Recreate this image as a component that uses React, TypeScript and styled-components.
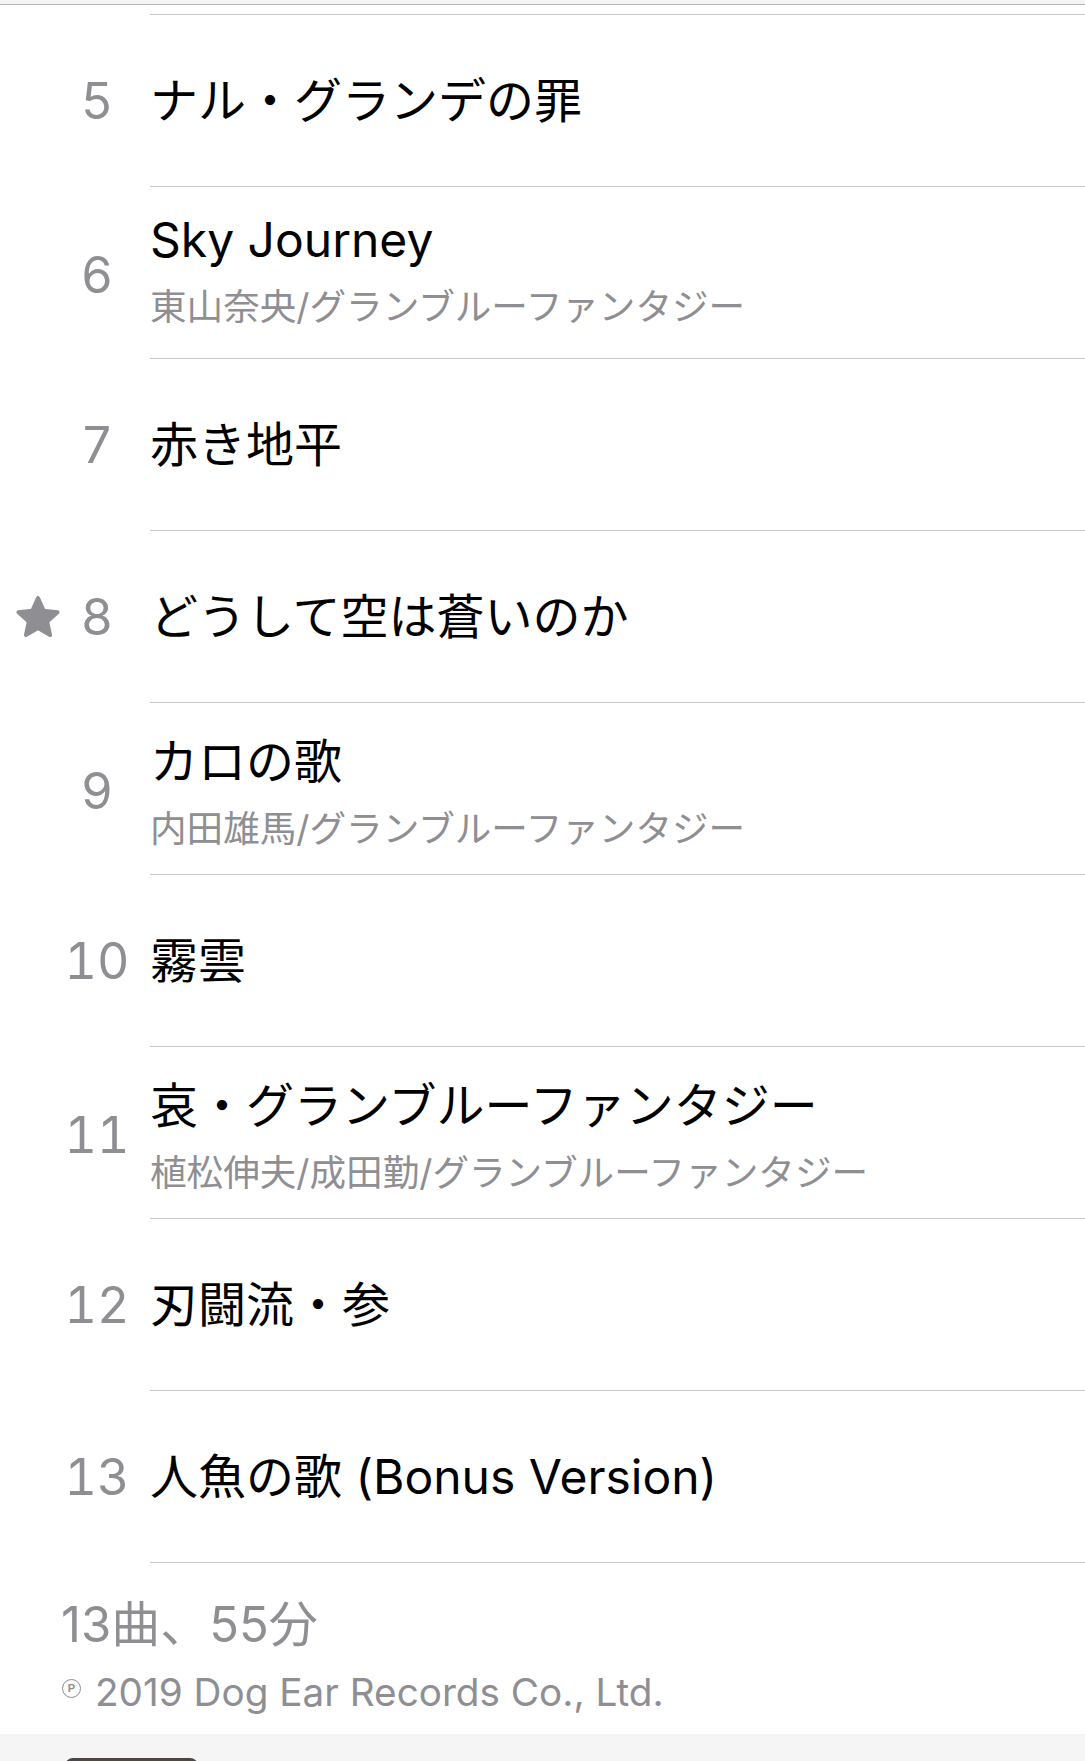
import React from "react";
import styled, { createGlobalStyle } from "styled-components";

const GlobalStyle = createGlobalStyle`
  html, body {
    margin: 0;
    padding: 0;
    background: #ffffff;
  }
  body {
    font-family: "Inter", "Noto Sans CJK JP", sans-serif;
    -webkit-font-smoothing: antialiased;
  }
`;

const Page = styled.div`
  width: 1085px;
  height: 1761px;
  overflow: hidden;
  display: flex;
  flex-direction: column;
  background: #ffffff;
`;

const NavEdge = styled.div`
  height: 4px;
  flex: none;
  background: #f4f4f4;
  border-bottom: 1px solid #b4b4b4;
`;

const List = styled.div`
  display: flex;
  flex-direction: column;
  flex: none;
`;

const Row = styled.div<{ $height: number }>`
  display: grid;
  grid-template-columns: 150px 1fr;
  height: ${(p) => p.$height}px;
`;

const Lead = styled.div<{ $shift?: number }>`
  display: grid;
  grid-template-columns: 67px 60px;
  align-items: center;
  padding-top: ${(p) => p.$shift ?? 0}px;
`;

const StarSlot = styled.div`
  display: flex;
  align-items: center;
  padding-left: 16px;
`;

const NumberSlot = styled.div`
  display: flex;
  justify-content: center;
  font-family: "Inter", sans-serif;
  font-size: 50px;
  font-variant-numeric: tabular-nums;
  line-height: 60px;
  color: #8e8e93;
  white-space: nowrap;
`;

const Body = styled.div<{ $shift?: number }>`
  display: flex;
  flex-direction: column;
  justify-content: center;
  border-bottom: 1px solid #c8c7cc;
  min-width: 0;
  padding-top: ${(p) => Math.max(0, (p.$shift ?? 0) * 2)}px;
  padding-bottom: ${(p) => Math.max(0, -(p.$shift ?? 0) * 2)}px;
`;

const Title = styled.div`
  font-family: "Inter", "Noto Sans CJK JP", sans-serif;
  font-size: 48px;
  line-height: 54px;
  color: #000000;
  white-space: nowrap;
`;

const Artist = styled.div`
  margin-top: 17px;
  font-family: "Inter", "Noto Sans CJK JP", sans-serif;
  font-size: 36.6px;
  line-height: 46px;
  color: #8e8e93;
  white-space: nowrap;
`;

const Footer = styled.div`
  flex: 1;
  display: flex;
  flex-direction: column;
  padding: 32px 0 0 59px;
`;

const Summary = styled.div`
  margin-left: 2px;
  font-family: "Inter", "Noto Sans CJK JP", sans-serif;
  font-size: 49px;
  line-height: 60px;
  color: #8e8e93;
  white-space: nowrap;
`;

const Copyright = styled.div`
  margin-top: 14px;
  display: flex;
  align-items: flex-start;
  font-family: "Inter", sans-serif;
  font-size: 38.7px;
  line-height: 46px;
  color: #8e8e93;
  white-space: nowrap;
`;

const PMark = styled.span`
  display: inline-flex;
  align-items: center;
  justify-content: center;
  box-sizing: border-box;
  width: 19px;
  height: 19px;
  margin: 10px 14px 0 3px;
  border: 1.6px solid #8e8e93;
  border-radius: 50%;
  font-family: "Liberation Sans", sans-serif;
  font-size: 11px;
  font-weight: 700;
  line-height: 1;
  color: #8e8e93;
`;

const MiniPlayer = styled.div`
  height: 27px;
  flex: none;
  background: #f5f5f5;
  display: flex;
  align-items: flex-start;
  padding-left: 65px;
  overflow: hidden;
`;

const Artwork = styled.div`
  margin-top: 24px;
  width: 133px;
  height: 133px;
  flex: none;
  border-radius: 8px;
  background: linear-gradient(180deg, #4d4540 0%, #7a6a5e 30%, #a89a8c 100%);
`;

type Track = {
  n: number;
  title: string;
  artist?: string;
  starred?: boolean;
};

const tracks: Track[] = [
  { n: 5, title: "ナル・グランデの罪" },
  { n: 6, title: "Sky Journey", artist: "東山奈央/グランブルーファンタジー" },
  { n: 7, title: "赤き地平" },
  { n: 8, title: "どうして空は蒼いのか", starred: true },
  { n: 9, title: "カロの歌", artist: "内田雄馬/グランブルーファンタジー" },
  { n: 10, title: "霧雲" },
  {
    n: 11,
    title: "哀・グランブルーファンタジー",
    artist: "植松伸夫/成田勤/グランブルーファンタジー",
  },
  { n: 12, title: "刃闘流・参" },
  { n: 13, title: "人魚の歌 (Bonus Version)" },
];

const hasCjk = (s: string) => /[\u3000-\u9fff]/.test(s);

const StarIcon = () => (
  <svg width="44" height="42" viewBox="0 0 44 42" aria-hidden="true">
    <path
      d="M22 2 L27.67 14.7 L41.5 16.17 L31.17 25.48 L34.05 39.08 L22 32.14 L9.95 39.08 L12.83 25.48 L2.5 16.17 L16.33 14.7 Z"
      fill="#8e8e93"
      stroke="#8e8e93"
      strokeWidth="4"
      strokeLinejoin="round"
    />
  </svg>
);

const TrackRow = ({ track }: { track: Track }) => {
  const shift = track.artist ? (hasCjk(track.title) ? 4.5 : -1.5) : 0;
  return (
    <Row $height={172}>
      <Lead $shift={track.artist ? 3 : 0}>
        <StarSlot>{track.starred ? <StarIcon /> : null}</StarSlot>
        <NumberSlot>{track.n}</NumberSlot>
      </Lead>
      <Body $shift={shift}>
        <Title>{track.title}</Title>
        {track.artist ? <Artist>{track.artist}</Artist> : null}
      </Body>
    </Row>
  );
};

export default function App() {
  return (
    <Page>
      <GlobalStyle />
      <NavEdge />
      <List>
        <Row $height={10}>
          <Lead />
          <Body />
        </Row>
        {tracks.map((t) => (
          <TrackRow key={t.n} track={t} />
        ))}
      </List>
      <Footer>
        <Summary>13曲、55分</Summary>
        <Copyright>
          <PMark>P</PMark>
          2019 Dog Ear Records Co., Ltd.
        </Copyright>
      </Footer>
      <MiniPlayer>
        <Artwork />
      </MiniPlayer>
    </Page>
  );
}
